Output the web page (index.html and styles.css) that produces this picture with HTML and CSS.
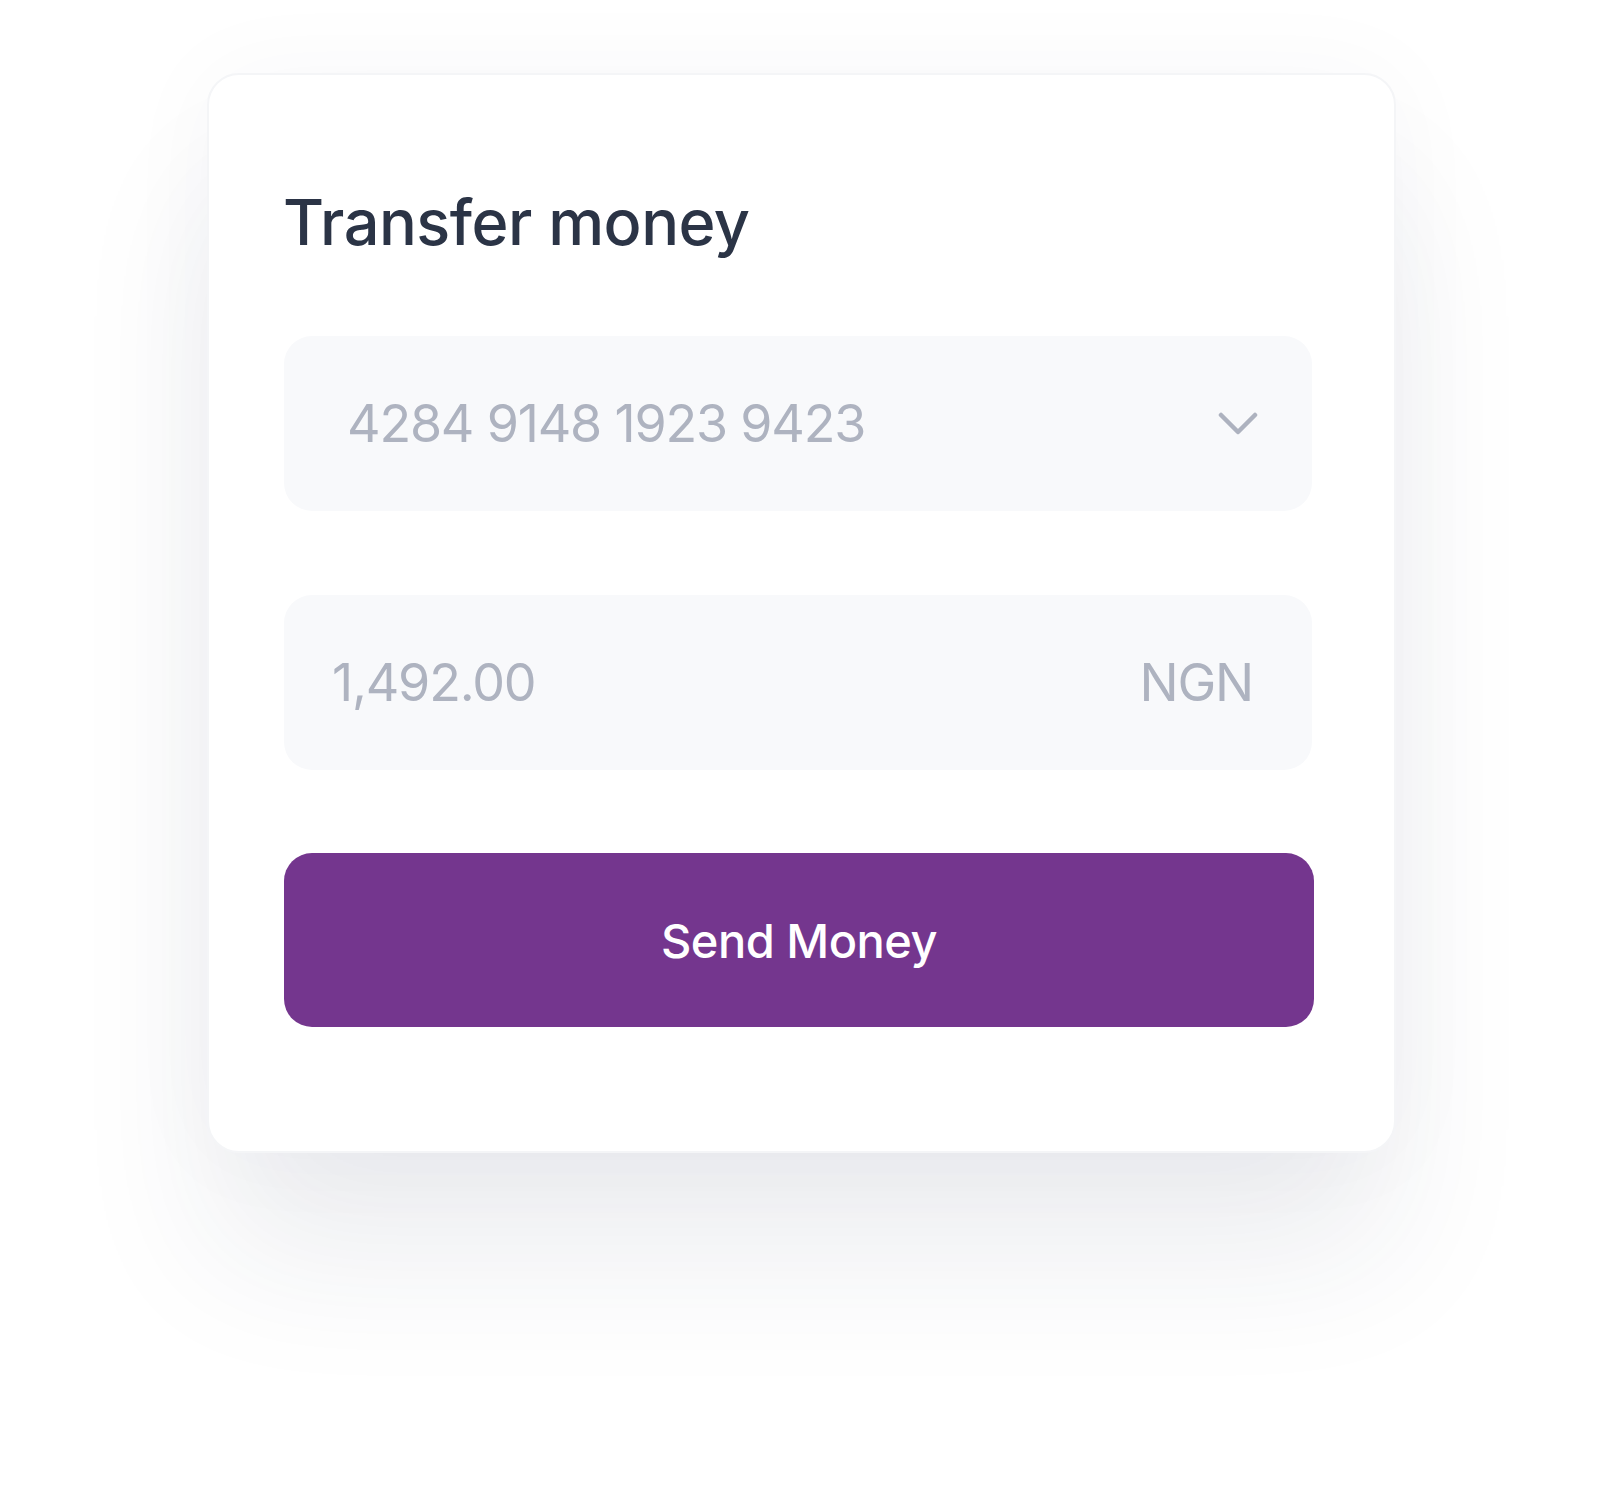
FILE: index.html
```html
<!DOCTYPE html>
<html lang="en">
<head>
<meta charset="utf-8">
<title>Transfer money</title>
<link rel="stylesheet" href="styles.css">
</head>
<body>
<main class="stage">
  <section class="card">
    <h1 class="title">Transfer money</h1>
    <div class="field field-select">
      <span class="field-value card-number">4284 9148 1923 9423</span>
      <svg class="chevron" width="40" height="24" viewBox="0 0 40 24" aria-hidden="true">
        <polyline points="3,3 20,20 37,3" fill="none" stroke="#adb2bf" stroke-width="4.5" stroke-linecap="round" stroke-linejoin="round"/>
      </svg>
    </div>
    <div class="field field-amount">
      <span class="field-value amount">1,492.00</span>
      <span class="field-value currency">NGN</span>
    </div>
    <button class="send-btn" type="button">Send Money</button>
  </section>
</main>
</body>
</html>
```

FILE: styles.css
```css
html, body {
  margin: 0;
  padding: 0;
  background: #ffffff;
}

body {
  font-family: "Inter", "Lato", "Liberation Sans", sans-serif;
  width: 1600px;
  height: 1489px;
  overflow: hidden;
}

.stage {
  padding: 73px 0 0 207px;
}

.card {
  box-sizing: border-box;
  width: 1189px;
  height: 1080px;
  padding: 0 82px 0 75px;
  background: #ffffff;
  border: 2px solid #f4f5f7;
  border-radius: 32px;
  box-shadow:
    0 110px 150px -10px rgba(40, 50, 80, 0.085),
    0 0 100px rgba(40, 50, 80, 0.035);
  display: flex;
  flex-direction: column;
}

.title {
  margin: 109px 0 0 -1px;
  font-size: 63px;
  line-height: 76px;
  font-weight: 500;
  color: #2b3446;
  letter-spacing: -0.5px;
}

.field {
  box-sizing: border-box;
  height: 175px;
  background: #f8f9fb;
  border-radius: 28px;
  display: flex;
  align-items: center;
  justify-content: space-between;
}

.field-select {
  margin-top: 76px;
  padding: 0 54px 0 63px;
}

.field-amount {
  margin-top: 84px;
  padding: 0 59px 0 48px;
}

.field-value {
  font-size: 52px;
  color: #aeb3c0;
  font-weight: 400;
  letter-spacing: -1.2px;
}

.chevron {
  display: block;
}

.send-btn {
  margin: 83px -2px 0 0;
  height: 174px;
  border: none;
  border-radius: 28px;
  background: #74368e;
  color: #ffffff;
  font-family: inherit;
  font-size: 47px;
  font-weight: 500;
  letter-spacing: -0.5px;
}
```
